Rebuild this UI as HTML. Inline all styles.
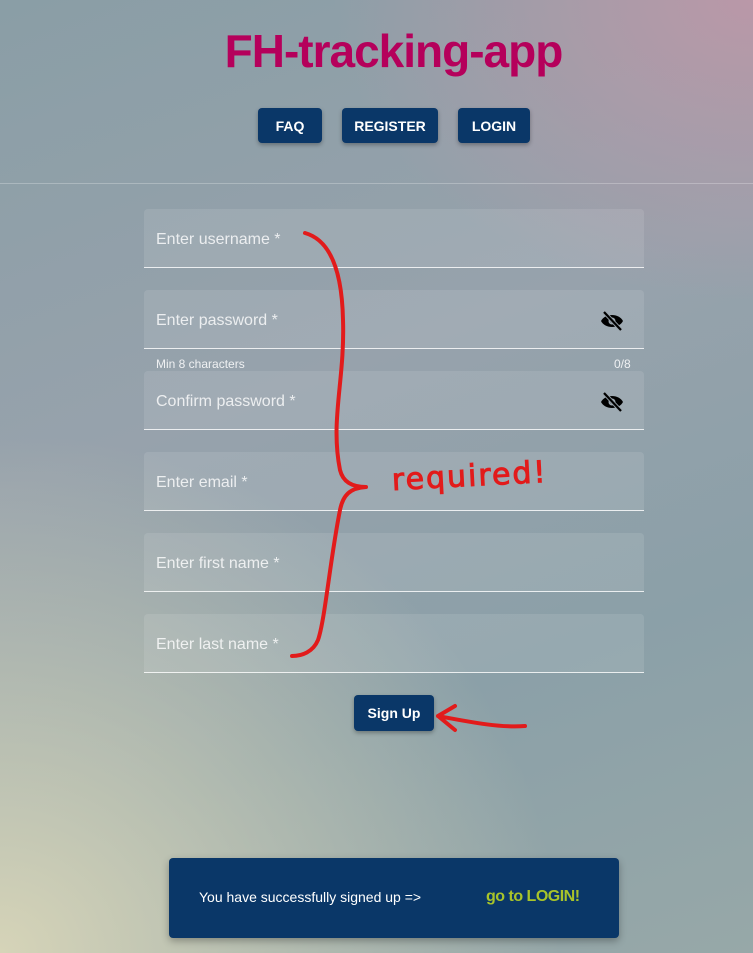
<!DOCTYPE html>
<html><head><meta charset="utf-8"><style>
*{margin:0;padding:0;box-sizing:border-box}
body{width:753px;height:953px;overflow:hidden;position:relative;font-family:"Liberation Sans",Arial,sans-serif;
background:
radial-gradient(ellipse 560px 520px at 0% 100%, rgba(214,212,184,1), rgba(214,212,184,0) 100%),
radial-gradient(ellipse 420px 300px at 100% 0%, rgba(186,152,168,1), rgba(186,152,168,0) 100%),
linear-gradient(160deg,#8a9ea6 0%,#97a2ac 40%,#8ba0a8 70%,#97a8a8 100%);}
.title{position:absolute;top:24px;left:34px;width:719px;text-align:center;font-size:46px;font-weight:bold;color:#b5005b;letter-spacing:-1px}
.btn{position:absolute;background:#0a3768;color:#fff;font-weight:bold;font-size:14px;border-radius:4px;display:flex;align-items:center;justify-content:center;box-shadow:0 2px 4px rgba(0,0,0,.3)}
.hr{position:absolute;top:183px;left:0;width:753px;height:1px;background:rgba(255,255,255,.25)}
.f{position:absolute;left:144px;width:500px;height:59px;background:rgba(255,255,255,.1);border-bottom:1px solid rgba(255,255,255,.8);border-radius:4px 4px 0 0}
.f span{position:absolute;left:12px;top:22px;font-size:16px;color:rgba(255,255,255,.8)}
.eye{position:absolute;right:20px;top:20px}
.hint{position:absolute;top:357px;font-size:12px;color:rgba(255,255,255,.85)}
.snack{position:absolute;left:169px;top:858px;width:450px;height:80px;background:#0a3768;border-radius:4px;box-shadow:0 3px 8px rgba(0,0,0,.3)}
</style></head><body>
<div class="title">FH-tracking-app</div>
<div class="btn" style="left:258px;top:108px;width:64px;height:35px">FAQ</div>
<div class="btn" style="left:342px;top:108px;width:96px;height:35px">REGISTER</div>
<div class="btn" style="left:458px;top:108px;width:72px;height:35px">LOGIN</div>
<div class="hr"></div>
<div class="f" style="top:209px"><span>Enter username *</span></div>
<div class="f" style="top:290px"><span>Enter password *</span>
<svg class="eye" width="24" height="22" viewBox="0 0 24 22"><path d="M1 11C5 3 19 3 23 11C19 19 5 19 1 11Z" fill="#000"/><circle cx="12" cy="11" r="3.5" fill="#9aa5ad"/><circle cx="12" cy="11" r="1.8" fill="#000"/><path d="M4 2L21 20" stroke="#9aa5ad" stroke-width="4"/><path d="M4 2L21 20" stroke="#000" stroke-width="2.2"/></svg></div>
<div class="hint" style="left:156px">Min 8 characters</div>
<div class="hint" style="left:614px">0/8</div>
<div class="f" style="top:371px"><span>Confirm password *</span>
<svg class="eye" width="24" height="22" viewBox="0 0 24 22"><path d="M1 11C5 3 19 3 23 11C19 19 5 19 1 11Z" fill="#000"/><circle cx="12" cy="11" r="3.5" fill="#9aa5ad"/><circle cx="12" cy="11" r="1.8" fill="#000"/><path d="M4 2L21 20" stroke="#9aa5ad" stroke-width="4"/><path d="M4 2L21 20" stroke="#000" stroke-width="2.2"/></svg></div>
<div class="f" style="top:452px"><span>Enter email *</span></div>
<div class="f" style="top:533px"><span>Enter first name *</span></div>
<div class="f" style="top:614px"><span>Enter last name *</span></div>
<div class="btn" style="left:354px;top:695px;width:80px;height:36px">Sign Up</div>
<div class="snack">
<div style="position:absolute;left:30px;top:31px;color:#fff;font-size:14px">You have successfully signed up =&gt;</div>
<div style="position:absolute;left:317px;top:30px;color:#a8c42a;font-size:16px;font-weight:bold;letter-spacing:-0.5px">go to LOGIN!</div>
</div>
<svg style="position:absolute;left:0;top:0" width="753" height="953">
<g fill="none" stroke="#e21b1b" stroke-width="4" stroke-linecap="round" stroke-linejoin="round">
<path d="M305 233C330 240 342 270 343 320C345 380 330 420 340 470C343 482 352 487 366 487C350 488 343 495 340 510C330 560 325 620 318 640C313 652 302 656 292 656"/>
<path d="M438 716L455 706M438 716L455 730M438 716C470 722 500 728 525 726"/>
</g>
<text x="392" y="486" font-family="DejaVu Sans,sans-serif" font-size="30" fill="#e21b1b" stroke="#e21b1b" stroke-width="1" letter-spacing="2" transform="rotate(-3 470 480)">required!</text>
</svg>
</body></html>
